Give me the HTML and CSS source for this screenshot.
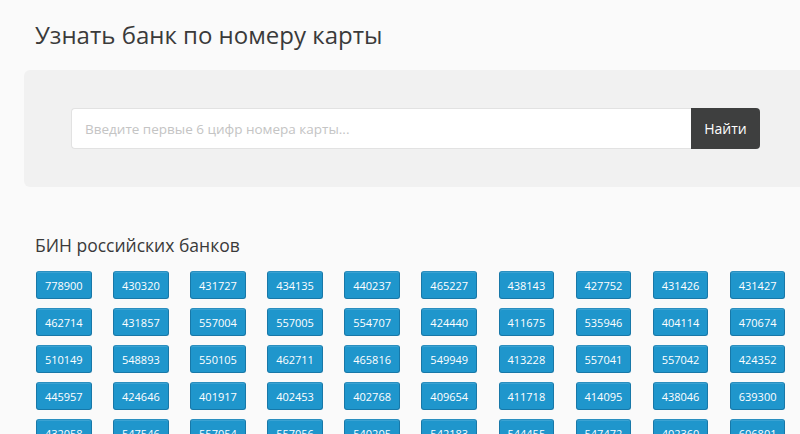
FILE: index.html
```html
<!DOCTYPE html>
<html lang="ru">
<head>
  <meta charset="UTF-8"/>
  <meta name="viewport" content="width=device-width,initial-scale=1.0"/>
  <title>Узнать банк по номеру карты</title>
  <link rel="stylesheet" href="styles.css">
</head>
<body>
  <div class="container">
    <h1>Узнать банк по номеру карты</h1>

    <div class="search-panel">
      <form class="search-form">
        <input type="text" class="search-input" placeholder="Введите первые 6 цифр номера карты...">
        <button type="submit" class="search-btn">Найти</button>
      </form>
    </div>

    <h2>БИН российских банков</h2>
    <div class="bin-list">
      <a class="bin" href="#">778900</a>
      <a class="bin" href="#">430320</a>
      <a class="bin" href="#">431727</a>
      <a class="bin" href="#">434135</a>
      <a class="bin" href="#">440237</a>
      <a class="bin" href="#">465227</a>
      <a class="bin" href="#">438143</a>
      <a class="bin" href="#">427752</a>
      <a class="bin" href="#">431426</a>
      <a class="bin" href="#">431427</a>

      <a class="bin" href="#">462714</a>
      <a class="bin" href="#">431857</a>
      <a class="bin" href="#">557004</a>
      <a class="bin" href="#">557005</a>
      <a class="bin" href="#">554707</a>
      <a class="bin" href="#">424440</a>
      <a class="bin" href="#">411675</a>
      <a class="bin" href="#">535946</a>
      <a class="bin" href="#">404114</a>
      <a class="bin" href="#">470674</a>

      <a class="bin" href="#">510149</a>
      <a class="bin" href="#">548893</a>
      <a class="bin" href="#">550105</a>
      <a class="bin" href="#">462711</a>
      <a class="bin" href="#">465816</a>
      <a class="bin" href="#">549949</a>
      <a class="bin" href="#">413228</a>
      <a class="bin" href="#">557041</a>
      <a class="bin" href="#">557042</a>
      <a class="bin" href="#">424352</a>

      <a class="bin" href="#">445957</a>
      <a class="bin" href="#">424646</a>
      <a class="bin" href="#">401917</a>
      <a class="bin" href="#">402453</a>
      <a class="bin" href="#">402768</a>
      <a class="bin" href="#">409654</a>
      <a class="bin" href="#">411718</a>
      <a class="bin" href="#">414095</a>
      <a class="bin" href="#">438046</a>
      <a class="bin" href="#">639300</a>

      <a class="bin" href="#">432058</a>
      <a class="bin" href="#">547546</a>
      <a class="bin" href="#">557054</a>
      <a class="bin" href="#">557056</a>
      <a class="bin" href="#">540205</a>
      <a class="bin" href="#">542183</a>
      <a class="bin" href="#">544455</a>
      <a class="bin" href="#">547472</a>
      <a class="bin" href="#">402360</a>
      <a class="bin" href="#">606801</a>
    </div>
  </div>
</body>
</html>
```

FILE: styles.css
```css
:root {
  --bg: #fafafa;
  --panel: #f1f1f1;
  --text: #333;
  --muted: #c4c4c4;
  --blue: #1f96cc;
  --blue-border: #1878a8;
  --dark: #3e3f3f;
}
* { box-sizing: border-box; }
html, body { overflow: hidden; }
body {
  margin: 0;
  background: var(--bg);
  color: var(--text);
  font-family: 'Open Sans', 'Noto Sans', sans-serif;
}
.container { padding: 0 0 0 24px; width: 860px; }

h1 {
  margin: 0;
  padding: 18px 0 0 11px;
  height: 70px;
  font-size: 24px;
  font-weight: 400;
  line-height: 34px;
  color: #3a3a3a;
}

.search-panel {
  background: var(--panel);
  border-radius: 6px;
  padding: 38px 0 38px 47px;
}
.search-form { display: flex; }
.search-input {
  width: 620px; height: 41px;
  padding: 0 13px;
  background: #fff;
  border: 1px solid #e2e2e2;
  border-right: none;
  border-radius: 4px 0 0 4px;
  font-family: inherit;
  font-size: 13.5px;
  color: var(--text);
  outline: none;
}
.search-input::placeholder { color: var(--muted); }
.search-btn {
  width: 69px; height: 41px;
  background: var(--dark);
  border: none;
  border-radius: 0 4px 4px 0;
  color: #fff;
  font-family: inherit;
  font-size: 14px;
  cursor: pointer;
}
.search-btn:hover { background: #2c2c2c; }

h2 {
  margin: 45px 0 0;
  padding-left: 11px;
  font-size: 17.5px;
  font-weight: 400;
  line-height: 26px;
  color: #3a3a3a;
}

.bin-list {
  display: flex; flex-wrap: wrap;
  gap: 9px 21.6px;
  margin-top: 13px;
  padding-left: 12px;
  width: 790px;
}
.bin {
  display: flex; align-items: center; justify-content: center;
  width: 55.5px; height: 28px;
  background: var(--blue);
  border: 1px solid var(--blue-border);
  border-top-color: #2a8fc0;
  border-radius: 3px;
  box-shadow: inset 0 1px 0 rgba(255,255,255,0.12);
  color: #fff;
  font-size: 11px;
  text-decoration: none;
}
.bin:hover { background: #1a85b6; }
```
